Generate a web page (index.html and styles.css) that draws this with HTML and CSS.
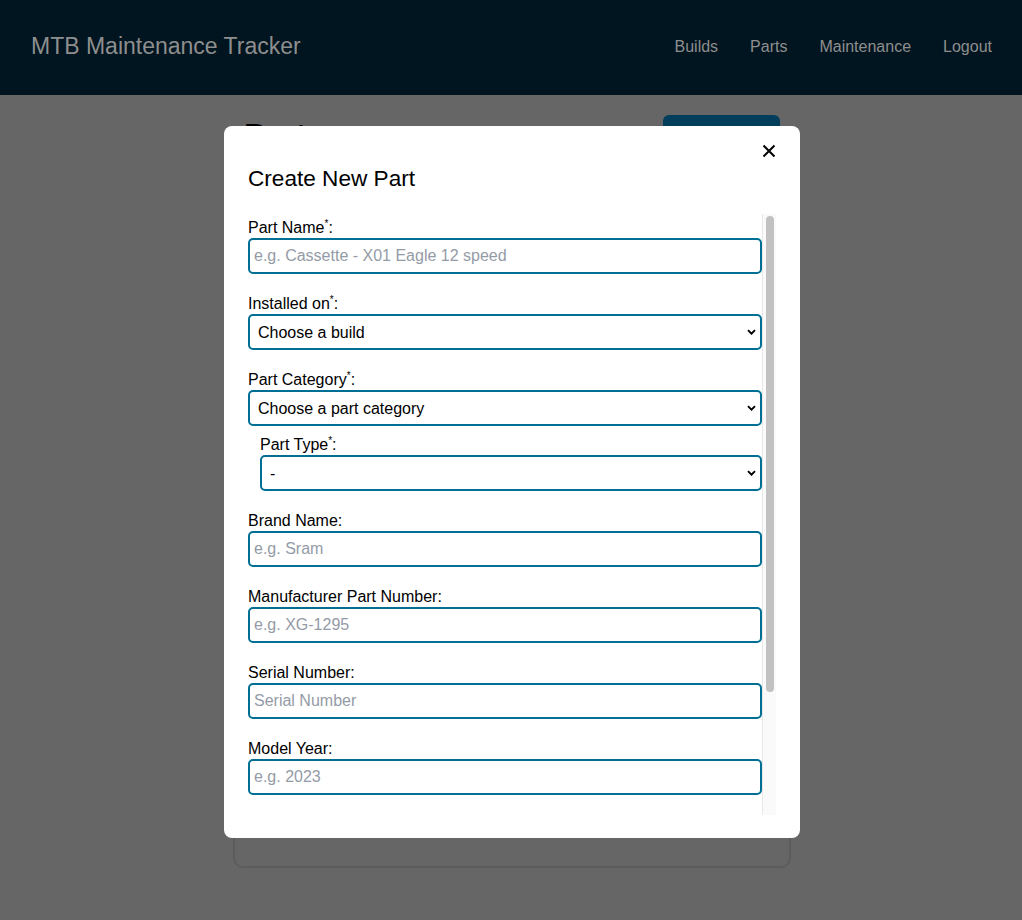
FILE: index.html
```html
<!DOCTYPE html>
<html lang="en">
<head>
<meta charset="utf-8">
<title>MTB Maintenance Tracker - Parts</title>
<link rel="stylesheet" href="styles.css">
</head>
<body>
<header class="topbar">
  <a class="brand" href="#">MTB Maintenance Tracker</a>
  <nav class="nav">
    <a href="#">Builds</a>
    <a href="#">Parts</a>
    <a href="#">Maintenance</a>
    <a href="#">Logout</a>
  </nav>
</header>

<main class="page">
  <div class="page-head">
    <h1>Parts</h1>
    <button class="btn-primary">New Part</button>
  </div>
  <section class="card"></section>
</main>

<div class="overlay"></div>

<div class="modal-wrap">
  <div class="modal">
    <div class="modal-top">
      <button class="close" aria-label="Close">
        <svg width="14" height="14" viewBox="0 0 14 14"><path d="M1.5 1.5 L12.5 12.5 M12.5 1.5 L1.5 12.5" stroke="#000" stroke-width="2" fill="none"/></svg>
      </button>
    </div>
    <h2 class="modal-title">Create New Part</h2>
    <div class="form-pane">
      <form class="form-scroll">
        <div class="field">
          <label>Part Name<sup>*</sup>:</label>
          <input type="text" placeholder="e.g. Cassette - X01 Eagle 12 speed">
        </div>
        <div class="field">
          <label>Installed on<sup>*</sup>:</label>
          <select><option>Choose a build</option></select>
        </div>
        <div class="field tight">
          <label>Part Category<sup>*</sup>:</label>
          <select><option>Choose a part category</option></select>
        </div>
        <div class="field sub">
          <label>Part Type<sup>*</sup>:</label>
          <select><option>-</option></select>
        </div>
        <div class="field">
          <label>Brand Name:</label>
          <input type="text" placeholder="e.g. Sram">
        </div>
        <div class="field">
          <label>Manufacturer Part Number:</label>
          <input type="text" placeholder="e.g. XG-1295">
        </div>
        <div class="field">
          <label>Serial Number:</label>
          <input type="text" placeholder="Serial Number">
        </div>
        <div class="field">
          <label>Model Year:</label>
          <input type="text" placeholder="e.g. 2023">
        </div>
      </form>
      <div class="scroll-track" aria-hidden="true">
        <div class="scroll-thumb"></div>
      </div>
    </div>
  </div>
</div>
</body>
</html>
```

FILE: styles.css
```css
* { box-sizing: border-box; }

html, body {
  margin: 0;
  padding: 0;
  height: 100%;
}

body {
  font-family: "Liberation Sans", Arial, sans-serif;
  background: #ffffff;
  color: #000;
  overflow: hidden;
}

.topbar {
  position: relative;
  z-index: 60;
  height: 95px;
  background: #001520;
  display: flex;
  align-items: center;
  justify-content: space-between;
  padding: 0 30px 2px 31px;
}

.brand {
  color: #8e8e8e;
  font-size: 23px;
  text-decoration: none;
}

.nav {
  display: flex;
  gap: 32px;
}

.nav a {
  color: #8e8e8e;
  font-size: 16px;
  text-decoration: none;
}

.page {
  width: 558px;
  margin: 0 auto;
  padding-top: 20px;
  position: relative;
  left: 1px;
}

.page-head {
  display: flex;
  justify-content: space-between;
  align-items: flex-start;
  padding: 0 11px;
}

.page-head h1 {
  margin: 2px 0 0;
  font-size: 32px;
  font-weight: bold;
}

.btn-primary {
  background: #009be6;
  color: #fff;
  border: none;
  border-radius: 6px;
  width: 117px;
  height: 44px;
  font-size: 16px;
  font-family: inherit;
}

.card {
  margin-top: 12px;
  height: 697px;
  border: 2px solid #e6e6e6;
  border-radius: 10px;
}

.overlay {
  position: fixed;
  inset: 0;
  background: rgba(0, 0, 0, 0.6);
  z-index: 50;
}

.modal-wrap {
  position: fixed;
  inset: 0;
  z-index: 70;
  display: flex;
  justify-content: center;
  align-items: flex-start;
  padding-top: 126px;
  padding-left: 2px;
}

.modal {
  width: 576px;
  height: 712px;
  background: #fff;
  border-radius: 8px;
  padding: 12px 24px 23px 24px;
  display: flex;
  flex-direction: column;
}

.modal-top {
  display: flex;
  justify-content: flex-end;
  height: 24px;
}

.close {
  background: none;
  border: none;
  padding: 0;
  width: 24px;
  height: 24px;
  display: flex;
  align-items: center;
  justify-content: center;
  margin-right: -5px;
  margin-top: 1px;
  cursor: pointer;
}

.modal-title {
  margin: 3px 0 21px;
  font-size: 22.6px;
  font-weight: normal;
  line-height: 28px;
}

.form-pane {
  flex: 1;
  min-height: 0;
  display: flex;
}

.form-scroll {
  flex: 1;
  min-width: 0;
  overflow: hidden;
}

.scroll-track {
  width: 14px;
  flex: none;
  background: #fafafa;
  border-left: 1px solid #e8e8e8;
  padding: 2px 2px 0 3px;
}

.scroll-thumb {
  height: 476px;
  background: #c1c1c1;
  border-radius: 4px;
}

.field {
  display: flex;
  flex-direction: column;
  margin-bottom: 16px;
}

.field.tight { margin-bottom: 5px; }

.field.sub { padding-left: 12px; }

.field label {
  font-size: 16px;
  line-height: 24px;
  padding-top: 2px;
  margin-bottom: -2px;
  color: #000;
}

.field label sup {
  font-size: 10px;
  line-height: 0;
  vertical-align: 6px;
}

.field input,
.field select {
  height: 36px;
  width: 100%;
  border: 2px solid #016f94;
  border-radius: 5px;
  font-size: 16px;
  font-family: inherit;
  color: #000;
  background-color: #fff;
  outline: none;
}

.field input {
  padding: 0 4px;
}

.field input::placeholder {
  color: #949ba6;
}

.field select {
  appearance: none;
  -webkit-appearance: none;
  padding: 0 24px 0 8px;
  background-image: url("data:image/svg+xml,%3Csvg xmlns='http://www.w3.org/2000/svg' width='9' height='6' viewBox='0 0 9 6'%3E%3Cpath d='M1 1.2 L4.5 4.7 L8 1.2' stroke='%23000' stroke-width='1.9' fill='none'/%3E%3C/svg%3E");
  background-repeat: no-repeat;
  background-position: right 4px center;
}
```
